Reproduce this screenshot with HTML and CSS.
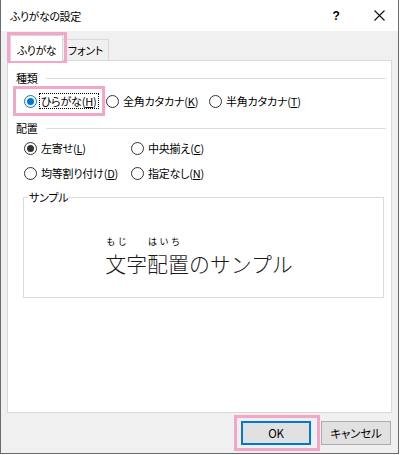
FILE: index.html
```html
<!DOCTYPE html>
<html lang="ja">
<head>
<meta charset="utf-8">
<link rel="stylesheet" href="styles.css">
</head>
<body>
<div class="window">
  <div class="titlebar">
    <span class="title">ふりがなの設定</span>
    <span class="tb-btn help">?</span>
    <span class="tb-btn close"><svg width="11" height="11" viewBox="0 0 11 11"><path d="M0.5 0.5 L10.5 10.5 M10.5 0.5 L0.5 10.5" stroke="#111" stroke-width="1.1" fill="none"/></svg></span>
  </div>
  <div class="content">
    <div class="tabs">
      <div class="tab active">ふりがな</div>
      <div class="tab">フォント</div>
    </div>
    <div class="panel">
      <div class="group-head"><span>種類</span><span class="rule"></span></div>
      <div class="row row-type">
        <label class="opt"><span class="radio checked-blue"></span><span class="focus">ひらがな(<u>H</u>)</span></label>
        <label class="opt"><span class="radio"></span><span class="txt">全角カタカナ(<u>K</u>)</span></label>
        <label class="opt"><span class="radio"></span><span class="txt">半角カタカナ(<u>T</u>)</span></label>
      </div>
      <div class="group-head head2"><span>配置</span><span class="rule"></span></div>
      <div class="row row-align first">
        <label class="opt"><span class="radio checked-dark"></span><span class="txt">左寄せ(<u>L</u>)</span></label>
        <label class="opt"><span class="radio"></span><span class="txt">中央揃え(<u>C</u>)</span></label>
      </div>
      <div class="row row-align second">
        <label class="opt"><span class="radio"></span><span class="txt">均等割り付け(<u>D</u>)</span></label>
        <label class="opt"><span class="radio"></span><span class="txt">指定なし(<u>N</u>)</span></label>
      </div>
      <fieldset class="samplebox">
        <legend>サンプル</legend>
        <div class="sample">
          <span class="rb"><span class="rt">もじ</span><span class="rbase">文字</span></span>
          <span class="rb"><span class="rt">はいち</span><span class="rbase">配置</span></span>
          <span class="rb"><span class="rt"></span><span class="rbase">のサンプル</span></span>
        </div>
      </fieldset>
    </div>
    <div class="footer">
      <button class="btn ok">OK</button>
      <button class="btn">キャンセル</button>
    </div>
  </div>
  <div class="mark mark-tab"></div>
  <div class="mark mark-radio"></div>
  <div class="mark mark-ok"></div>
</div>
</body>
</html>
```
FILE: styles.css
```css
* { box-sizing: border-box; }
html, body { margin: 0; padding: 0; background: #fff; }
body {
  font-family: "Noto Sans CJK JP", "Noto Sans", sans-serif;
  font-size: 11px;
  letter-spacing: -0.2px;
  color: #000;
  font-feature-settings: "palt";
}
.window {
  position: relative;
  width: 399px;
  height: 454px;
  border: 1px solid #6b6b6b;
  border-top: none;
  display: flex;
  flex-direction: column;
  background: #fff;
}
.titlebar {
  height: 31px;
  display: flex;
  align-items: center;
  padding-left: 9px;
  background: #fff;
}
.title { font-size: 11px; letter-spacing: -0.4px; flex: 1; }
.tb-btn {
  width: 30px;
  height: 31px;
  display: flex;
  align-items: center;
  justify-content: center;
}
.help { font-weight: bold; font-size: 12px; font-family: "Liberation Sans", sans-serif; }
.close { margin-left: 13px; margin-right: 4px; }
.content {
  flex: 1;
  background: #f0f0f0;
  padding: 0 6px 0 6px;
  display: flex;
  flex-direction: column;
}
.tabs {
  height: 29px;
  display: flex;
  align-items: flex-end;
  padding-left: 3px;
}
.tab {
  height: 21px;
  width: 47px;
  border: 1px solid #d9d9d9;
  border-bottom: none;
  background: #f0f0f0;
  display: flex;
  align-items: center;
  justify-content: center;
  margin-left: -1px;
}
.tab.active {
  height: 26px;
  width: 53px;
  margin-left: 0;
  margin-bottom: -1px;
  background: #fff;
  position: relative;
  z-index: 1;
  padding-top: 2px;
  letter-spacing: -0.5px;
}
.panel {
  height: 353px;
  background: #fff;
  border: 1px solid #d9d9d9;
  padding: 0 5px 0 8px;
  display: flex;
  flex-direction: column;
}
.group-head {
  height: 16px;
  display: flex;
  align-items: center;
  margin-top: 9px;
}
.group-head.head2 { margin-top: 11px; }
.rule { flex: 1; height: 1px; background: #dcdcdc; margin-left: 8px; }
.row {
  height: 16px;
  display: grid;
  align-items: center;
  padding-left: 8px;
}
.row-type { margin-top: 7px; grid-template-columns: 82px 103px auto; }
.row-align { grid-template-columns: 107px auto; }
.row-align.first { margin-top: 4px; }
.row-align.second { margin-top: 9px; }
.opt { display: flex; align-items: center; white-space: nowrap; }
.radio {
  width: 13px;
  height: 13px;
  border-radius: 50%;
  border: 1px solid #333;
  background: #fff;
  display: flex;
  align-items: center;
  justify-content: center;
  flex: none;
}
.radio.checked-blue { border-color: #0078d7; }
.radio.checked-blue::after {
  content: "";
  width: 7px; height: 7px; border-radius: 50%; background: #0078d7;
}
.radio.checked-dark::after {
  content: "";
  width: 7px; height: 7px; border-radius: 50%; background: #333;
}
.txt { margin-left: 4px; line-height: 16px; }
.focus {
  margin-left: 2px;
  border: 1px dotted #000;
  padding: 0 1px;
  line-height: 14px;
}
u { text-underline-offset: 1px; }
.samplebox {
  margin: 8px 2px 0 7px;
  padding: 0;
  height: 109px;
  border: 1px solid #dcdcdc;
  min-width: 0;
}
.samplebox legend {
  margin-left: 4px;
  padding: 0 1px;
  line-height: 16px;
}
.sample {
  padding-top: 31px;
  padding-right: 9px;
  display: flex;
  justify-content: center;
  align-items: flex-end;
  letter-spacing: 0;
}
.rb { display: flex; flex-direction: column; }
.rt {
  height: 11px;
  font-size: 9px;
  line-height: 11px;
  letter-spacing: 2.4px;
  padding-left: 1px;
  margin-bottom: 4px;
  font-feature-settings: normal;
}
.rbase {
  font-size: 20.9px;
  line-height: 24px;
  font-weight: 300;
  font-feature-settings: normal;
  color: #1a1a1a;
}
.footer {
  display: flex;
  justify-content: flex-end;
  padding-top: 8px;
  padding-right: 1px;
  gap: 10px;
}
.btn {
  width: 70px;
  height: 24px;
  background: #e1e1e1;
  border: 1px solid #adadad;
  font-family: inherit;
  font-size: 11.5px;
  color: #000;
  padding: 0;
  letter-spacing: -0.2px;
  font-feature-settings: "palt";
}
.btn.ok { border: 2px solid #0078d7; }
.mark {
  position: absolute;
  border: 3px solid #f3a6c7;
  pointer-events: none;
}
.mark-tab { left: 6px; top: 32px; width: 60px; height: 31px; }
.mark-radio { left: 12px; top: 86px; width: 92px; height: 30px; }
.mark-ok { left: 233px; top: 415px; width: 86px; height: 36px; }
```
